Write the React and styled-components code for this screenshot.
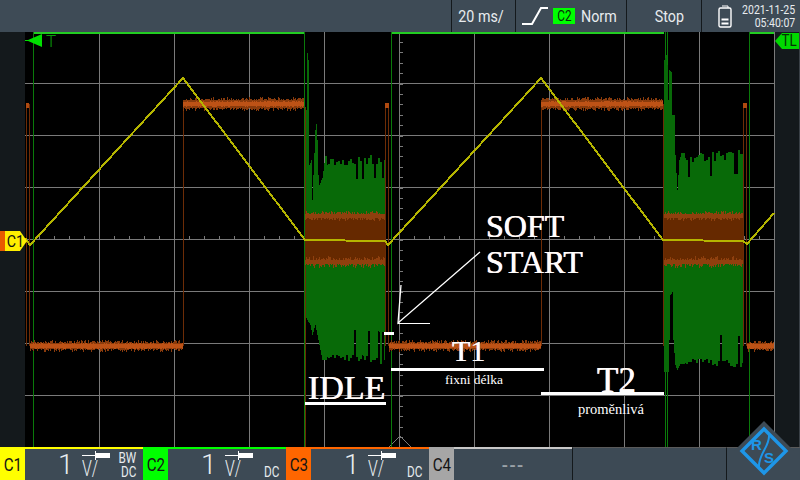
import React from "react";
import styled, { createGlobalStyle } from "styled-components";

// seeded noise so the traces come out the same on every render
const makeRandom = (start) => {
  let seed = start;
  return () => {
    seed = (seed * 16807) % 2147483647;
    return seed / 2147483647;
  };
};

const interpolate = (points, x) => {
  for (let i = 1; i < points.length; i++) {
    const [x0, y0] = points[i - 1];
    const [x1, y1] = points[i];
    if (x <= x1) return y0 + ((y1 - y0) * (x - x0)) / (x1 - x0 || 1);
  }
  return points[points.length - 1][1];
};

const columns = (x0, x1, fn) => {
  let d = "";
  for (let x = x0; x < x1; x++) {
    const [top, bottom] = fn(x);
    d += `M${x + 0.5} ${top.toFixed(0)}V${bottom.toFixed(0)}`;
  }
  return d;
};

const burstPath = (x0, x1, topPts, bottomPts, seed) => {
  const rnd = makeRandom(seed);
  let a = 0;
  let b = 0;
  return columns(x0, x1, (x) => {
    // the capture holds a value for about two pixels
    if (x % 2 === 0) {
      a = rnd();
      b = rnd();
    }
    const dipTop = a > 0.9 ? 24 : a * 12;
    const dipBottom = b > 0.9 ? 32 : b * 8;
    return [
      interpolate(topPts, x) + (x > x0 + 20 ? dipTop : 0),
      interpolate(bottomPts, x) - (x > x0 + 20 ? dipBottom : 0),
    ];
  });
};

const bandPath = (x0, x1, yc, half, amp, seed) => {
  const rnd = makeRandom(seed);
  return columns(x0, x1, () => {
    const a = rnd();
    const b = rnd();
    return [yc - half - a * a * amp, yc + half + b * b * amp];
  });
};

const burst1Top = [[306, 110], [307, 53], [308, 60], [309, 165], [311, 160], [312, 200], [313, 175], [315, 130], [316, 124], [317, 140], [318, 175], [319, 185], [322, 178], [325, 156], [385, 154]];
const burst1Bottom = [[306, 318], [310, 325], [312, 335], [315, 325], [318, 340], [322, 360], [330, 360], [385, 364]];
const burst2Top = [[664, 60], [666, 55], [667, 65], [668, 100], [669, 70], [671, 72], [672, 115], [674, 115], [675, 155], [677, 190], [679, 160], [681, 153], [743, 150]];
const burst2Bottom = [[664, 372], [668, 372], [669, 340], [670, 295], [672, 292], [673, 340], [675, 365], [677, 370], [680, 364], [743, 368]];

const highBands = [[183, 304], [541, 663]];
const lowBands = [[30, 183], [389, 541], [747, 774]];
const bursts = [[305, 385], [664, 743]];

const greenLines = [33, 304, 391, 665, 667, 749];
const brownLines = [
  [26, 104, 346], [29, 104, 346], [183, 104, 346], [305, 107, 447],
  [385, 104, 346], [388, 104, 346], [541, 104, 346], [663, 104, 346],
  [743, 104, 346], [746, 104, 346],
];

const verticalGrid = [99, 174, 249, 324, 399, 474, 549, 624, 699, 774];
const horizontalGrid = [83, 135, 187, 239, 291, 343, 395, 447];

const tickList = (from, to, step) => {
  const out = [];
  for (let v = from; v <= to; v += step) out.push(Math.round(v));
  return out;
};

const Traces = () => (
  <PlotSvg viewBox="25 32 750 415">
    {verticalGrid.map((x) => (
      <line key={x} x1={x + 0.5} x2={x + 0.5} y1="32" y2="447" stroke="#7a7a7a" />
    ))}
    {horizontalGrid.map((y) => (
      <line key={y} x1="25" x2="775" y1={y + 0.5} y2={y + 0.5} stroke="#7a7a7a" />
    ))}
    {tickList(42, 447, 10.4).map((y) => (
      <line key={y} x1="400" x2="403" y1={y + 0.5} y2={y + 0.5} stroke="#7a7a7a" />
    ))}
    {tickList(39, 774, 15).map((x) => (
      <line key={x} x1={x + 0.5} x2={x + 0.5} y1="236" y2="239" stroke="#7a7a7a" />
    ))}
    <DiagonalPath d="M389 447L400 436L411 447" fill="none" stroke="#7a7a7a" />

    <path d="M33 32.5H304M391 32.5H664M749 32.5H774" stroke="#22cc22" strokeWidth="2" />
    {greenLines.map((x) => (
      <line key={x} x1={x + 0.5} x2={x + 0.5} y1="32" y2="447" stroke="#0a7a0a" />
    ))}

    <path d={burstPath(306, 385, burst1Top, burst1Bottom, 4711)} stroke="#086a08" />
    <path d={burstPath(664, 743, burst2Top, burst2Bottom, 9127)} stroke="#086a08" />

    {brownLines.map(([x, y1, y2]) => (
      <line key={x} x1={x + 0.5} x2={x + 0.5} y1={y1} y2={y2} stroke="#6d2c06" />
    ))}
    {bursts.map(([x0, x1], i) => (
      <g key={x0}>
        <rect x={x0} y="214" width={x1 - x0} height="50" fill="#662900" />
        <path d={bandPath(x0, x1, 216, 2, 3, 311 + i)} stroke="#8f400e" />
        <path d={bandPath(x0, x1, 262, 2, 4, 733 + i)} stroke="#8f400e" />
      </g>
    ))}
    {highBands.map(([x0, x1], i) => (
      <g key={x0}>
        <path d={bandPath(x0, x1, 104, 4, 3, 53 + i)} stroke="#8a3b0c" />
        <path d={bandPath(x0, x1, 104, 2, 1, 97 + i)} stroke="#bd5216" />
      </g>
    ))}
    {lowBands.map(([x0, x1], i) => (
      <g key={x0}>
        <path d={bandPath(x0, x1, 346, 3, 3, 181 + i)} stroke="#8a3b0c" />
        <path d={bandPath(x0, x1, 346, 2, 1, 229 + i)} stroke="#bd5216" />
      </g>
    ))}
    <path d="M26 103h3v5h-3zM385 103h4v5h-4zM743 103h4v5h-4z" fill="#b04a10" />

    <polyline
      points="25,238 30,245 183,78 305,240 385,241 388,245 541,78 663,240 743,241 747,244 774,213"
      fill="none"
      stroke="#b5b500"
      strokeWidth="2"
    />

    {/* hand drawn notes on top of the capture */}
    <path d="M305 403.5H386M391 369.5H544M541 393.5H664M384 333.5H394" stroke="#fff" strokeWidth="3" />
    <path d="M398 323.5H430" stroke="#fff" />
    <DiagonalPath d="M480 252L398 323L401 285" fill="none" stroke="#fff" strokeWidth="1.3" />
  </PlotSvg>
);

const channels = [
  { id: "C1", color: "#ffff00", coupling: ["BW", "DC"] },
  { id: "C2", color: "#00ff00", coupling: ["DC"] },
  { id: "C3", color: "#ff6600", coupling: ["DC"] },
];

const Probe = () => (
  <ProbeSvg viewBox="0 0 28 9">
    <path d="M0 4h13V0h1v2h14v5H14v2h-1V5H0z" fill="#fff" />
  </ProbeSvg>
);

const App = () => (
  <Screen>
    <GlobalStyle />
    <TopBar>
      <TimeSegment $width={64}>
        <Narrow>20 ms/</Narrow>
      </TimeSegment>
      <TriggerSegment>
        <svg width="26" height="18" viewBox="0 0 26 18">
          <polyline points="0,17 10,17 19,1 26,1" fill="none" stroke="#fff" strokeWidth="2" />
        </svg>
        <SourceBadge>
          <Narrow>C2</Narrow>
        </SourceBadge>
        <NormLabel>Norm</NormLabel>
      </TriggerSegment>
      <StopSegment $width={75}>
        <Narrow>Stop</Narrow>
      </StopSegment>
      <StatusSegment>
        <svg width="14" height="23" viewBox="0 0 14 23">
          <path d="M4 1h6v2" fill="none" stroke="#fff" />
          <rect x="1" y="3" width="12" height="19" rx="1.5" fill="none" stroke="#fff" strokeWidth="1.4" />
          <path d="M3.5 14.5h7M3.5 18.5h7" stroke="#fff" strokeWidth="2" />
        </svg>
        <DateTime>
          <DateLine>2021-11-25</DateLine>
          <DateLine>05:40:07</DateLine>
        </DateTime>
      </StatusSegment>
    </TopBar>

    <Scope>
      <SideRail />
      <Traces />
      <RightRail />

      <ChannelMarker>
        <Narrow>C1</Narrow>
      </ChannelMarker>
      <TriggerArrow />
      <TriggerLetter>T</TriggerLetter>
      <LevelMarker>
        <Narrow>TL</Narrow>
      </LevelMarker>

      <SoftStart>SOFT<br />START</SoftStart>
      <Note $x={308} $y={368} $size={34}>IDLE</Note>
      <Note $x={452} $y={334} $size={30}>T1</Note>
      <Note $x={597} $y={361} $size={35}>T2</Note>
      <Note $x={445} $y={372} $size={13.5}>fixni délka</Note>
      <Note $x={578} $y={401} $size={14.5}>proměnlivá</Note>
    </Scope>

    <BottomBar>
      {channels.map((c) => (
        <React.Fragment key={c.id}>
          <ChannelBadge $color={c.color}>
            <Narrow>{c.id}</Narrow>
          </ChannelBadge>
          <ChannelPanel $color={c.color}>
            <Scale>1</Scale>
            <UnitBox>
              <Probe />
              <Unit>V/</Unit>
            </UnitBox>
            <Coupling>
              {c.coupling.map((t) => (
                <CouplingLine key={t}>{t}</CouplingLine>
              ))}
            </Coupling>
          </ChannelPanel>
        </React.Fragment>
      ))}
      <ChannelBadge $color="#a6a6a6">
        <Narrow>C4</Narrow>
      </ChannelBadge>
      <EmptyChannel>---</EmptyChannel>
      <BlankPanel />
      <LogoPanel />
      <LogoMark viewBox="0 0 64 59">
        <path d="M32 0L62 30V59H2V30Z" fill="#3d4a55" />
        <path d="M32 8L54 30L32 52L10 30Z" fill="none" stroke="#1e96e8" strokeWidth="3.4" />
        <path d="M37 14C38 25 26 34 27 46" fill="none" stroke="#1e96e8" strokeWidth="2" />
        <LogoLetter x="19" y="29">R</LogoLetter>
        <LogoLetter x="32" y="42">S</LogoLetter>
      </LogoMark>
    </BottomBar>
  </Screen>
);

export default App;

const GlobalStyle = createGlobalStyle`
  html, body {
    margin: 0;
    background: #000;
    overflow: hidden;
  }
`;

const Screen = styled.div`
  display: flex;
  flex-direction: column;
  width: 800px;
  height: 480px;
  font-family: Roboto, sans-serif;
  color: #e8ecef;
`;

// the instrument font is condensed, none is installed
const Narrow = styled.span`
  display: inline-block;
  white-space: nowrap;
  transform: scaleX(0.84);
`;

const TopBar = styled.div`
  display: flex;
  justify-content: flex-end;
  flex: 0 0 32px;
  height: 32px;
  background: #3e4b56;
  font-size: 17px;
`;

const Segment = styled.div`
  display: flex;
  align-items: center;
  justify-content: center;
  width: ${(p) => p.$width}px;
  border-left: 1px solid #14191c;
  box-sizing: border-box;
`;

const TimeSegment = styled(Segment)`
  padding-right: 4px;
`;

const StopSegment = styled(Segment)`
  padding-left: 10px;
`;

const TriggerSegment = styled(Segment)`
  width: 111px;
  gap: 5px;
  justify-content: flex-start;
  padding-left: 6px;
`;

const NormLabel = styled(Narrow)`
  transform-origin: left;
  margin-left: 1px;
`;

const StatusSegment = styled(Segment)`
  width: 99px;
  justify-content: flex-start;
  padding-left: 16px;
`;

const SourceBadge = styled.span`
  display: flex;
  align-items: center;
  justify-content: center;
  width: 22px;
  height: 16px;
  background: #00ff00;
  color: #0a2a0a;
  font-size: 14px;
`;

const DateTime = styled.div`
  display: flex;
  flex-direction: column;
  align-items: flex-end;
  width: 63px;
`;

const DateLine = styled(Narrow)`
  transform-origin: right;
  font-size: 12.5px;
  line-height: 13px;
`;

const Scope = styled.div`
  position: relative;
  display: flex;
  flex: 0 0 415px;
  height: 415px;
  background: #000;
`;

const SideRail = styled.div`
  flex: 1;
  background: #14191c;
`;

const RightRail = styled(SideRail)`
  border-right: 1px solid #3a4046;
`;

const PlotSvg = styled.svg`
  flex: 0 0 750px;
  width: 750px;
  height: 415px;
  shape-rendering: crispEdges;
`;

const DiagonalPath = styled.path`
  shape-rendering: auto;
`;

const SoftStart = styled.div`
  position: absolute;
  left: 486px;
  top: 176px;
  font: 32px/36px "Liberation Serif", serif;
  color: #fff;
  text-shadow: -0.4px 0 #ffb070, 0.4px 0 #70b0ff;
`;

const Note = styled.div`
  position: absolute;
  left: ${(p) => p.$x}px;
  top: ${(p) => p.$y - 32}px;
  font: ${(p) => p.$size}px/1.15 "Liberation Serif", serif;
  color: #fff;
  white-space: nowrap;
  text-shadow: ${(p) => (p.$size > 20 ? "-0.4px 0 #ffb070, 0.4px 0 #70b0ff" : "none")};
`;

const ChannelMarker = styled.div`
  position: absolute;
  left: 0;
  top: 199px;
  width: 27px;
  height: 20px;
  padding-left: 5px;
  box-sizing: border-box;
  background: linear-gradient(90deg, #e85a00 5px, #ffee00 5px);
  clip-path: polygon(0 0, 20px 0, 27px 50%, 20px 100%, 0 100%);
  color: #111;
  font-size: 17px;
  line-height: 20px;
`;

const TriggerArrow = styled.div`
  position: absolute;
  left: 25px;
  top: 2px;
  width: 17px;
  height: 13px;
  background: #00e000;
  clip-path: polygon(0 46%, 18% 46%, 100% 0, 100% 100%, 18% 54%, 0 54%);
`;

const TriggerLetter = styled.div`
  position: absolute;
  left: 46px;
  top: 1px;
  color: #0a9a0a;
  font-size: 17px;
  font-weight: 300;
  line-height: 17px;
`;

const LevelMarker = styled.div`
  position: absolute;
  left: 775px;
  top: 1px;
  width: 24px;
  height: 16px;
  padding-left: 5px;
  box-sizing: border-box;
  background: #00d800;
  clip-path: polygon(0 50%, 7px 0, 100% 0, 100% 100%, 7px 100%);
  color: #063006;
  font-size: 16px;
  line-height: 16px;
`;

const BottomBar = styled.div`
  position: relative;
  display: flex;
  flex: 0 0 33px;
  height: 33px;
  background: #3d4a55;
`;

const ChannelBadge = styled.div`
  display: flex;
  align-items: center;
  justify-content: center;
  flex: 0 0 25px;
  background: ${(p) => p.$color};
  color: #151515;
  font-size: 18px;
  padding-top: 2px;
  box-sizing: border-box;
`;

const ChannelPanel = styled.div`
  display: flex;
  flex: 0 0 118px;
  box-sizing: border-box;
  height: 33px;
  padding-left: 33px;
  border-top: 2px solid ${(p) => p.$color};
`;

const Scale = styled.div`
  width: 24px;
  font-size: 28px;
  font-weight: 300;
  line-height: 31px;
`;

const UnitBox = styled.div`
  display: flex;
  flex-direction: column;
  width: 29px;
`;

const ProbeSvg = styled.svg`
  width: 28px;
  height: 9px;
  margin-top: 2px;
`;

const Unit = styled(Narrow)`
  font-size: 22px;
  font-weight: 300;
  line-height: 18px;
  transform: scaleX(0.72);
  transform-origin: left;
`;

const Coupling = styled.div`
  display: flex;
  flex-direction: column;
  justify-content: flex-end;
  align-items: flex-end;
  width: 25px;
  padding-bottom: 1px;
`;

const CouplingLine = styled(Narrow)`
  transform-origin: right;
  font-size: 14px;
  line-height: 14px;
`;

const EmptyChannel = styled.div`
  display: flex;
  align-items: center;
  justify-content: center;
  flex: 0 0 118px;
  box-sizing: border-box;
  border-top: 2px solid #c8c8c8;
  color: #9aa2a8;
  font-size: 17px;
  font-weight: bold;
  letter-spacing: 1px;
`;

const BlankPanel = styled.div`
  flex: 0 0 155px;
  box-sizing: border-box;
  border-left: 1px solid #14191c;
  border-right: 1px solid #14191c;
  border-top: 1px solid #5a5a5a;
`;

const LogoPanel = styled.div`
  flex: 1;
  border-top: 1px solid #5a5a5a;
`;

const LogoMark = styled.svg`
  position: absolute;
  left: 732px;
  top: -26px;
  width: 64px;
  height: 59px;
`;

const LogoLetter = styled.text`
  font: bold 15px "Liberation Sans", sans-serif;
  fill: #1e96e8;
`;
